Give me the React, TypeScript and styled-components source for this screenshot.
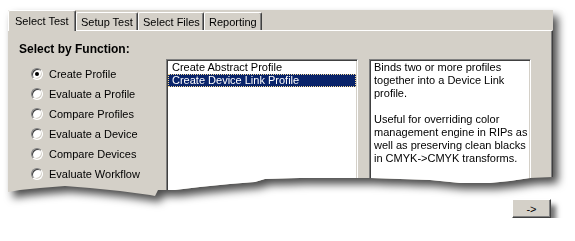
import styled, { createGlobalStyle } from "styled-components";

const GlobalStyle = createGlobalStyle`
  body {
    margin: 0;
    background: #fff;
    font-family: "Liberation Sans", Arial, sans-serif;
    font-size: 11px;
    color: #000;
  }
`;

const Page = styled.div`
  padding: 10px 0 0 8px;
  width: 545px;
`;

const Shadowed = styled.div`
  filter: drop-shadow(5px 6px 4px rgba(0, 0, 0, 0.7));
`;

// torn paper bottom edge
const Dialog = styled.div`
  height: 188px;
  background: #d4d0c8;
  display: flex;
  flex-direction: column;
  clip-path: polygon(
    0 0, 545px 0, 545px 167px, 522px 168px, 502px 171px, 482px 173px,
    452px 173px, 422px 170px, 392px 169px, 362px 168px, 292px 168px,
    257px 169px, 247px 172px, 222px 174px, 192px 177px, 167px 180px,
    150px 180px, 147px 186px, 142px 185px, 112px 181px, 82px 178px,
    57px 176px, 32px 178px, 12px 180px, 0 182px
  );
`;

const TabStrip = styled.div`
  display: flex;
  align-items: flex-end;
  height: 20px;
`;

const Tab = styled.div<{ $active?: boolean; $width: number }>`
  box-sizing: border-box;
  position: relative;
  z-index: ${(p) => (p.$active ? 1 : 0)};
  width: ${(p) => p.$width}px;
  height: ${(p) => (p.$active ? 21 : 18)}px;
  margin-bottom: ${(p) => (p.$active ? -1 : 0)}px;
  padding-left: ${(p) => (p.$active ? 6 : 4)}px;
  display: flex;
  align-items: center;
  background: #d4d0c8;
  border-top: 1px solid #fff;
  border-left: 1px solid #fff;
  border-right: 1px solid #404040;
  border-radius: 2px 2px 0 0;
  box-shadow: inset -1px 0 #808080;
  white-space: nowrap;
`;

const Body = styled.div`
  flex: 1;
  display: flex;
  padding: 10px 0 0 11px;
  border-top: 1px solid #fff;
  border-right: 1px solid #404040;
  box-shadow: inset -1px 0 #808080;
`;

const LeftColumn = styled.div`
  width: 147px;
  flex-shrink: 0;
`;

const Heading = styled.div`
  font-weight: bold;
  font-size: 12px;
  line-height: 16px;
  white-space: nowrap;
`;

const RadioList = styled.div`
  display: flex;
  flex-direction: column;
  margin-top: 7px;
  padding-left: 12px;
`;

const RadioRow = styled.label`
  display: flex;
  align-items: center;
  gap: 6px;
  height: 20px;
  white-space: nowrap;
`;

const RadioDot = styled.span<{ $checked?: boolean }>`
  box-sizing: border-box;
  position: relative;
  width: 12px;
  height: 12px;
  border-radius: 50%;
  background: #fff;
  border: 1px solid;
  border-color: #808080 #fff #fff #808080;
  box-shadow: inset 1px 1px #404040, inset -1px -1px #d4d0c8;

  &::after {
    content: "";
    display: ${(p) => (p.$checked ? "block" : "none")};
    position: absolute;
    left: 3px;
    top: 3px;
    width: 4px;
    height: 4px;
    border-radius: 50%;
    background: #000;
  }
`;

const Sunken = styled.div<{ $width: number }>`
  box-sizing: border-box;
  width: ${(p) => p.$width}px;
  height: 160px;
  margin-top: 18px;
  flex-shrink: 0;
  background: #fff;
  border: 1px solid;
  border-color: #808080 #fff #fff #808080;
  box-shadow: inset 1px 1px #404040, inset -1px -1px #d4d0c8;
`;

const ListBox = styled(Sunken)`
  padding: 1px;
`;

const ListItem = styled.div<{ $selected?: boolean }>`
  box-sizing: border-box;
  height: 13px;
  line-height: 13px;
  padding-left: 4px;
  white-space: nowrap;
  background: ${(p) => (p.$selected ? "#0a246a" : "transparent")};
  color: ${(p) => (p.$selected ? "#fff" : "#000")};
  outline: ${(p) => (p.$selected ? "1px dotted #f5db95" : "none")};
  outline-offset: -1px;
`;

const Description = styled(Sunken)`
  margin-left: 11px;
  padding: 1px 4px;
  line-height: 13px;
  white-space: nowrap;
`;

const ButtonRow = styled.div`
  display: flex;
  justify-content: flex-end;
  padding-right: 2px;
  margin-top: 1px;
`;

const NextButton = styled.button`
  box-sizing: border-box;
  width: 39px;
  height: 19px;
  padding: 0;
  font-family: inherit;
  font-size: 11px;
  color: #000;
  background: #d4d0c8;
  border: 1px solid;
  border-color: #fff #404040 #404040 #fff;
  box-shadow: inset -1px -1px #808080, 5px 6px 5px rgba(0, 0, 0, 0.55);
`;

const tabs = [
  { label: "Select Test", width: 68 },
  { label: "Setup Test", width: 62 },
  { label: "Select Files", width: 66 },
  { label: "Reporting", width: 58 },
];

const functions = [
  "Create Profile",
  "Evaluate a Profile",
  "Compare Profiles",
  "Evaluate a Device",
  "Compare Devices",
  "Evaluate Workflow",
];

export default function App() {
  return (
    <Page>
      <GlobalStyle />
      <Shadowed>
        <Dialog>
          <TabStrip>
            {tabs.map((t, i) => (
              <Tab key={t.label} $active={i === 0} $width={t.width}>
                {t.label}
              </Tab>
            ))}
          </TabStrip>
          <Body>
            <LeftColumn>
              <Heading>Select by Function:</Heading>
              <RadioList>
                {functions.map((f, i) => (
                  <RadioRow key={f}>
                    <RadioDot $checked={i === 0} />
                    {f}
                  </RadioRow>
                ))}
              </RadioList>
            </LeftColumn>
            <ListBox $width={192}>
              <ListItem>Create Abstract Profile</ListItem>
              <ListItem $selected>Create Device Link Profile</ListItem>
            </ListBox>
            <Description $width={162}>
              Binds two or more profiles
              <br />
              together into a Device Link
              <br />
              profile.
              <br />
              <br />
              Useful for overriding color
              <br />
              management engine in RIPs as
              <br />
              well as preserving clean blacks
              <br />
              in CMYK-&gt;CMYK transforms.
            </Description>
          </Body>
        </Dialog>
      </Shadowed>
      <ButtonRow>
        <NextButton>-&gt;</NextButton>
      </ButtonRow>
    </Page>
  );
}
